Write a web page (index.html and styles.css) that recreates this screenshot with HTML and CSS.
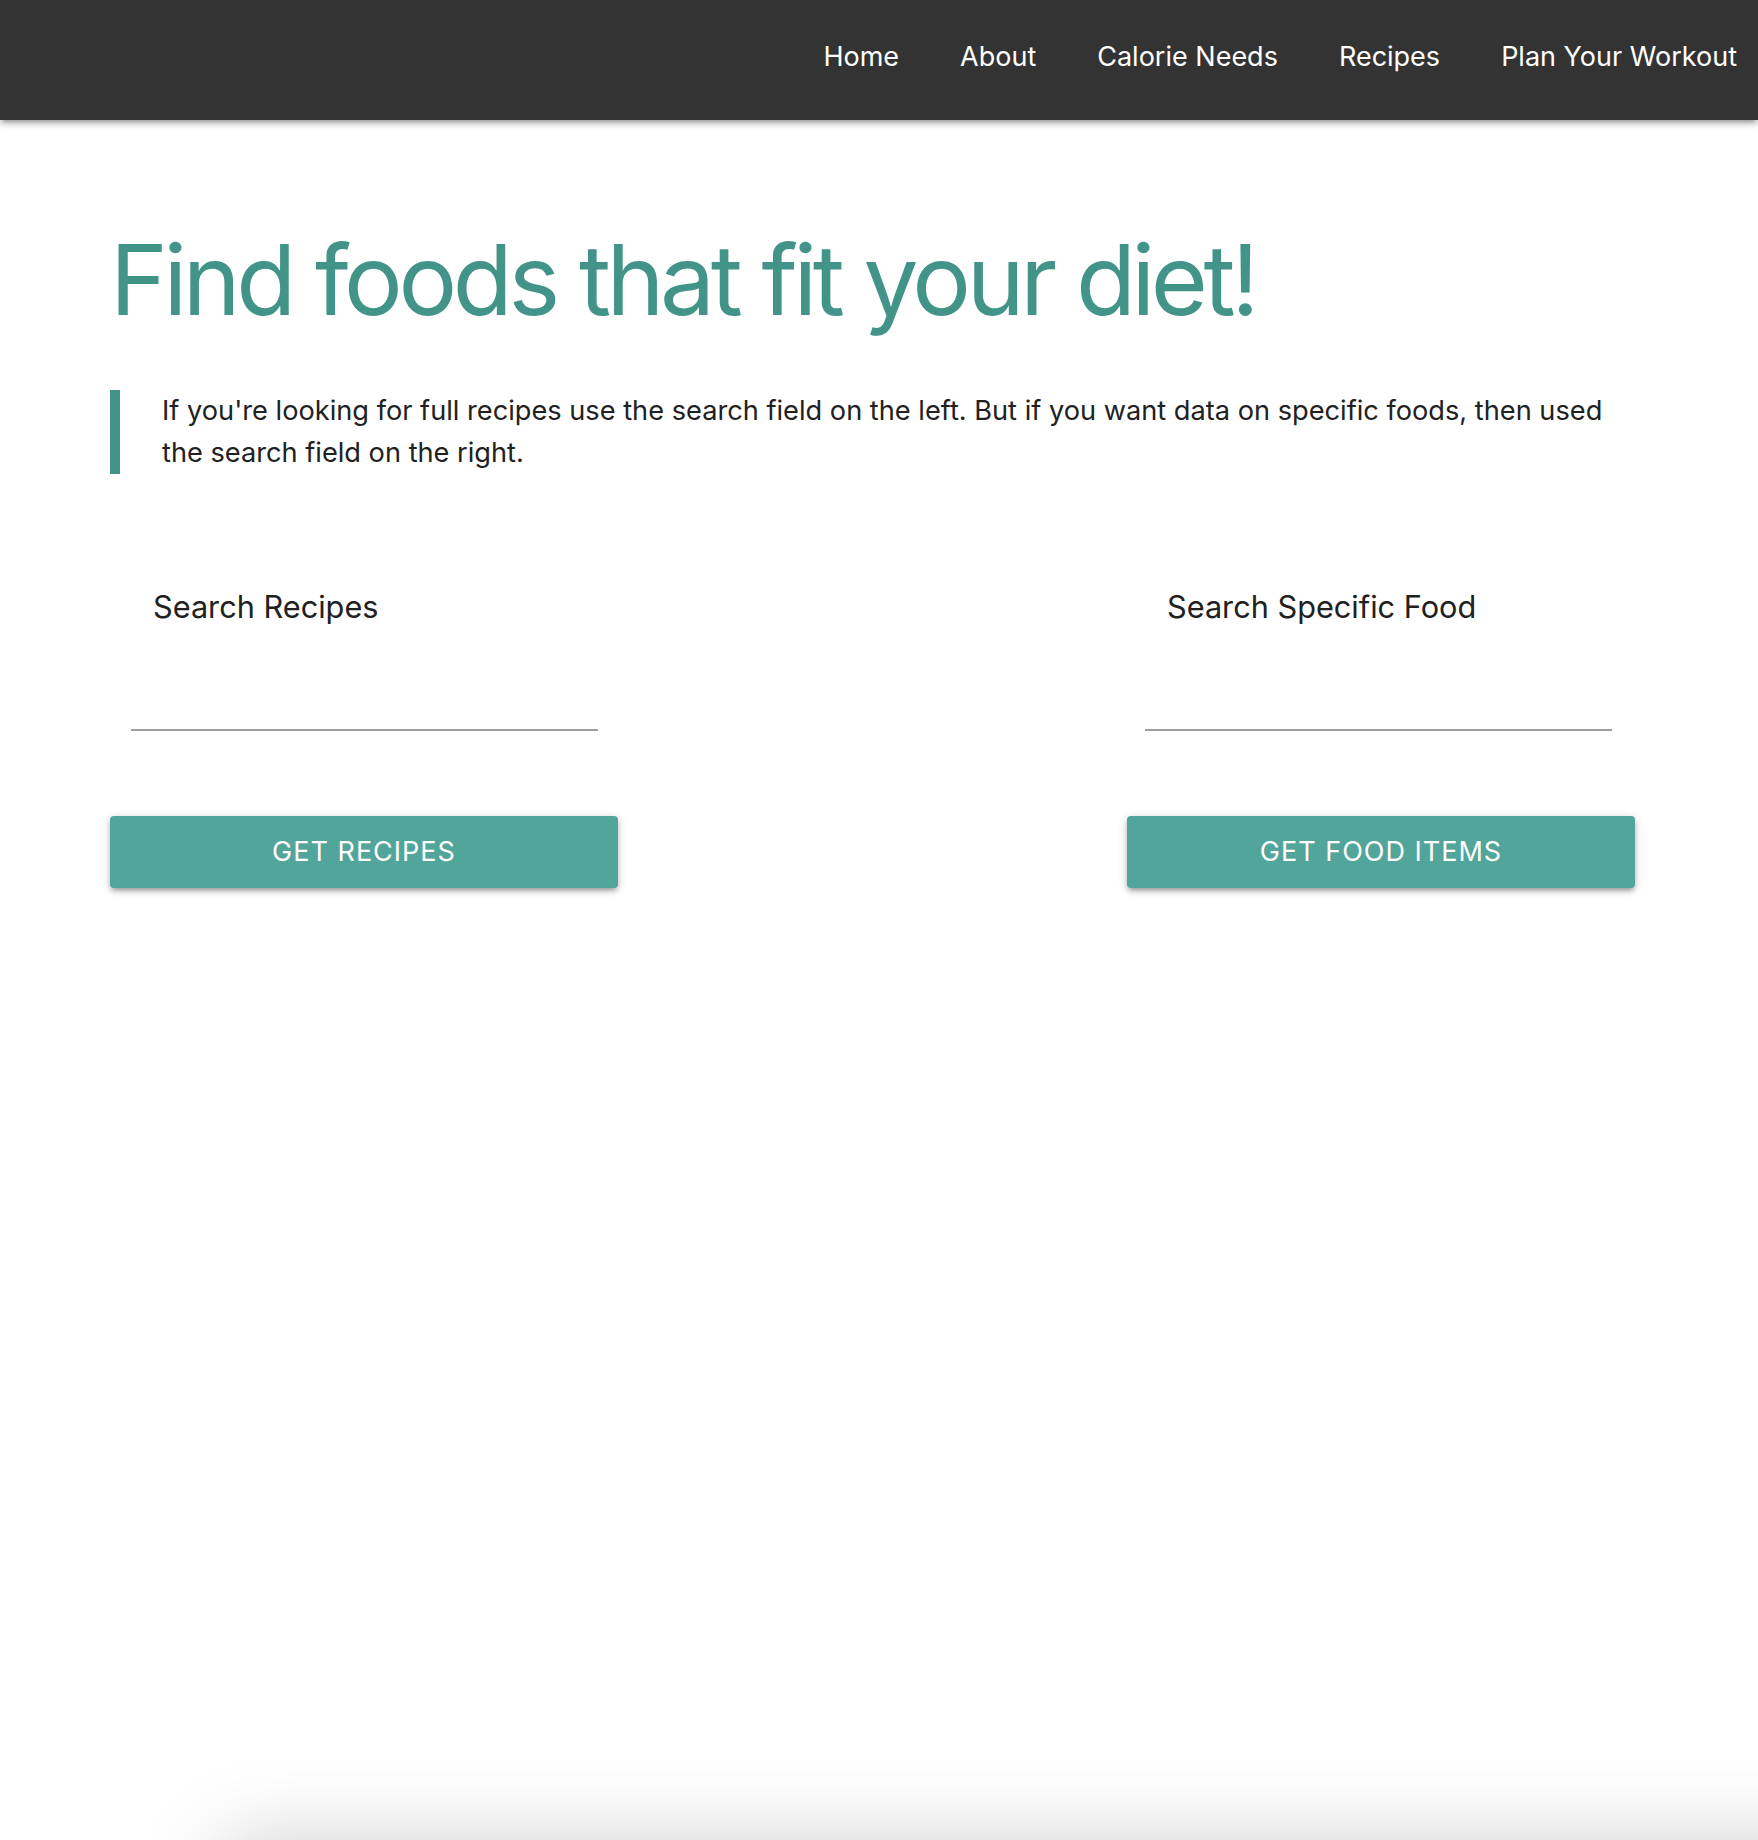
FILE: index.html
```html
<!DOCTYPE html>
<html lang="en">
<head>
<meta charset="utf-8">
<title>Find foods that fit your diet</title>
<link rel="stylesheet" href="styles.css">
</head>
<body>
<nav class="navbar">
  <ul class="nav-links">
    <li><a href="#">Home</a></li>
    <li><a href="#">About</a></li>
    <li><a href="#">Calorie Needs</a></li>
    <li><a href="#">Recipes</a></li>
    <li><a href="#">Plan Your Workout</a></li>
  </ul>
</nav>
<main class="container">
  <h1 class="title">Find foods that fit your diet!</h1>
  <blockquote class="intro">If you're looking for full recipes use the search field on the left. But if you want data on specific foods, then used the search field on the right.</blockquote>
  <div class="search-row">
    <div class="search-col">
      <div class="field">
        <label class="field-label" for="recipe">Search Recipes</label>
        <input class="field-input" id="recipe" type="text">
      </div>
      <button class="btn" type="button">Get Recipes</button>
    </div>
    <div class="search-col search-col-right">
      <div class="field">
        <label class="field-label" for="food">Search Specific Food</label>
        <input class="field-input" id="food" type="text">
      </div>
      <button class="btn" type="button">Get Food Items</button>
    </div>
  </div>
</main>
<section class="results"></section>
</body>
</html>
```

FILE: styles.css
```css
html, body {
  overflow-x: hidden;
}

body {
  margin: 0;
  background: #ffffff;
  color: #212121;
  font-family: "Inter", "Noto Sans", "Liberation Sans", sans-serif;
}

.navbar {
  height: 120px;
  background: #333333;
  display: flex;
  justify-content: flex-end;
  align-items: center;
  box-shadow: 0 4px 4px 0 rgba(0,0,0,0.14), 0 6px 2px -4px rgba(0,0,0,0.12), 0 2px 10px 0 rgba(0,0,0,0.2);
  position: relative;
  z-index: 2;
}

.nav-links {
  list-style: none;
  margin: 0;
  padding: 0 21px 8px 0;
  display: flex;
  gap: 61px;
}

.nav-links a {
  color: #ffffff;
  text-decoration: none;
  font-size: 27px;
}

.container {
  padding: 0 123px 0 110px;
}

.title {
  margin: 101px 0 0;
  font-size: 98px;
  line-height: 1.2;
  font-weight: 400;
  color: #429488;
  letter-spacing: -4.4px;
}

.intro {
  margin: 51px 0 0;
  padding-left: 42px;
  border-left: 10px solid #429488;
  font-size: 27.2px;
  line-height: 42px;
  color: #212121;
}

.search-row {
  margin-top: 110px;
  display: grid;
  grid-template-columns: 508px 508px;
  justify-content: space-between;
}

.field {
  margin: 0 20px 0 21px;
}

.search-col-right .field {
  margin: 0 23px 0 18px;
}

.field-label {
  display: block;
  padding-left: 22px;
  font-size: 30.7px;
  line-height: 46px;
  color: #212121;
}

.field-input {
  display: block;
  width: 100%;
  box-sizing: border-box;
  height: 101px;
  border: none;
  border-bottom: 2px solid #9e9e9e;
  background: transparent;
  outline: none;
  font: inherit;
}

.btn {
  display: block;
  width: 100%;
  height: 72px;
  margin-top: 85px;
  border: none;
  border-radius: 4px;
  background: #52a59a;
  color: #ffffff;
  font-family: inherit;
  font-size: 27px;
  letter-spacing: 1px;
  text-transform: uppercase;
  box-shadow: 0 4px 4px 0 rgba(0,0,0,0.14), 0 6px 2px -4px rgba(0,0,0,0.12), 0 2px 10px 0 rgba(0,0,0,0.2);
  cursor: pointer;
}

.results {
  margin: 958px -300px 0 225px;
  height: 400px;
  background: #ffffff;
  box-shadow: 0 0 80px rgba(0,0,0,0.22);
}
```
